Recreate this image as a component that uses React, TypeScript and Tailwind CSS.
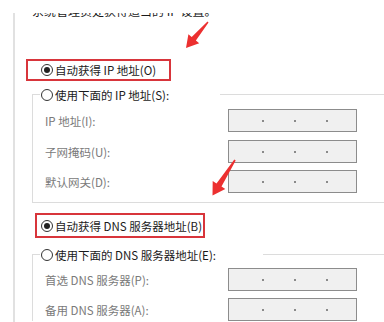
import React from "react";

const FONT = { fontFamily: '"Noto Sans CJK SC", "Noto Sans", sans-serif' };

function Radio({ checked }: { checked?: boolean }) {
  return (
    <div className="w-[12px] h-[12px] rounded-full border border-[#333333] bg-white flex items-center justify-center shrink-0">
      {checked ? <div className="w-[6px] h-[6px] rounded-full bg-[#222222]" /> : null}
    </div>
  );
}

function IpField() {
  return (
    <div className="w-[129px] h-[23px] bg-[#f0f0f0] border border-[#8c8c8c] flex items-center pl-[33px] gap-[30px]">
      <div className="w-[2px] h-[2px] bg-[#8a8a8a]" />
      <div className="w-[2px] h-[2px] bg-[#8a8a8a]" />
      <div className="w-[2px] h-[2px] bg-[#8a8a8a]" />
    </div>
  );
}

function Row({ label, className }: { label: string; className?: string }) {
  return (
    <div className={"flex items-center h-[23px] " + (className ?? "")}>
      <div className="w-[195px] pl-[12px] text-[#7a7a7a] text-[11.5px] leading-[14px]">{label}</div>
      <IpField />
    </div>
  );
}

export default function App() {
  return (
    <div className="relative w-[384px] h-[322px] bg-white overflow-hidden text-[#1a1a1a]" style={FONT}>
      <div className="flex h-full">
        <div className="w-[13px] shrink-0" />
        <div className="flex-1 mt-[13px] border-l-2 border-[#e1e1e1] flex flex-col">
          {/* clipped top text */}
          <div className="h-[5px] overflow-hidden ml-[17px]">
            <div className="mt-[-8px] text-[12px] leading-[12px] whitespace-nowrap">系统管理员处获得适当的 IP 设置。</div>
          </div>

          {/* red box 1 */}
          <div className="mt-[41px] ml-[11px] w-[145px] h-[22px] border-2 border-[#d8353b] flex items-center pl-[13px]">
            <Radio checked />
            <span className="ml-[2px] text-[11.5px] leading-[14px] whitespace-nowrap">自动获得 IP 地址(O)</span>
          </div>

          {/* group 1 */}
          <div className="ml-[17px] mt-[6px] flex flex-col">
            <div className="flex items-center h-[15px]">
              <div className="w-[8px] h-px bg-[#dcdcdc]" />
              <div className="w-[180px] flex items-center pl-[1px]">
                <Radio />
                <span className="ml-[2px] text-[11.5px] leading-[14px] whitespace-nowrap">使用下面的 IP 地址(S):</span>
              </div>
              <div className="flex-1 h-px bg-[#dcdcdc]" />
            </div>
            <div className="mt-[-8px] border-l border-b border-[#dcdcdc] pt-[15px] pb-[9px] flex flex-col">
              <Row label="IP 地址(I):" />
              <Row label="子网掩码(U):" className="mt-[8px]" />
              <Row label="默认网关(D):" className="mt-[7px]" />
            </div>
          </div>

          {/* red box 2 */}
          <div className="mt-[10px] ml-[20px] w-[170px] h-[25px] border-2 border-[#d8353b] flex items-center pl-[4px]">
            <Radio checked />
            <span className="ml-[2px] text-[11.5px] leading-[14px] whitespace-nowrap">自动获得 DNS 服务器地址(B)</span>
          </div>

          {/* group 2 */}
          <div className="ml-[17px] mt-[9px] flex flex-col">
            <div className="flex items-center h-[15px]">
              <div className="w-[8px] h-px bg-[#dcdcdc]" />
              <div className="w-[223px] flex items-center pl-[1px]">
                <Radio />
                <span className="ml-[2px] text-[11.5px] leading-[14px] whitespace-nowrap">使用下面的 DNS 服务器地址(E):</span>
              </div>
              <div className="flex-1 h-px bg-[#dcdcdc]" />
            </div>
            <div className="mt-[-8px] border-l border-[#dcdcdc] pt-[14px] flex flex-col">
              <Row label="首选 DNS 服务器(P):" />
              <Row label="备用 DNS 服务器(A):" className="mt-[7px]" />
            </div>
          </div>
        </div>
      </div>

      {/* annotation arrows */}
      <svg className="absolute left-0 top-0 pointer-events-none" width="384" height="322" viewBox="0 0 384 322">
        <polygon
          fill="#ec3030"
          points="208.5,22.5 195.9,40.6 199.2,43.3 186,48 188.4,34.3 191.7,37 207.5,21.5"
        />
        <polygon
          fill="#ec3030"
          points="235.7,160.4 221.5,186.6 225.3,189 212.5,195.5 212.7,181 216.5,183.4 234.3,159.6"
        />
      </svg>
    </div>
  );
}
